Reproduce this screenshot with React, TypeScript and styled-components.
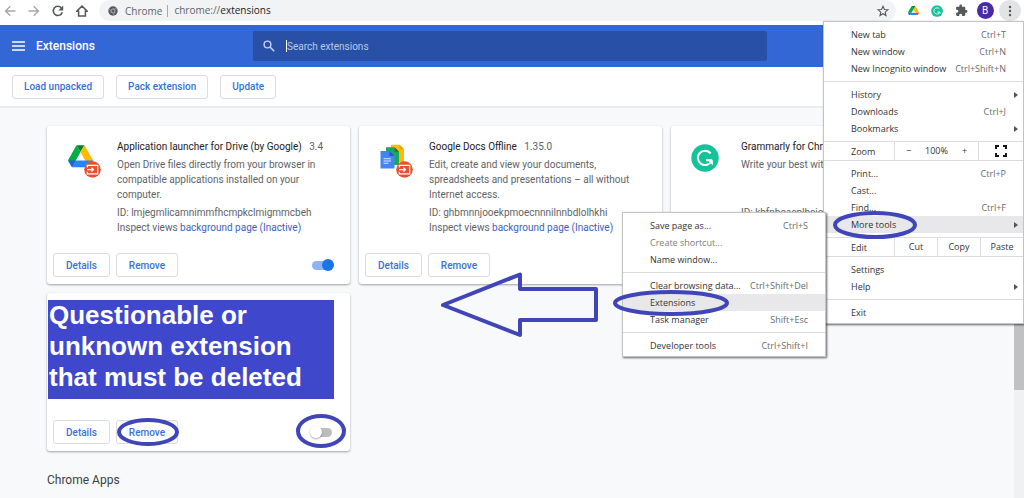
import React from 'react';
import styled, { createGlobalStyle } from 'styled-components';

const ROBOTO = 'Roboto, "Liberation Sans", sans-serif';
const SYSTEM = '"Open Sans", "Noto Sans", sans-serif';
const MARK = '#4045b8';

const GlobalStyle = createGlobalStyle`
  *, *::before, *::after { box-sizing: border-box; }
  html, body { margin: 0; overflow: hidden; background: #f8f9fb; }
  button, input { font: inherit; color: inherit; margin: 0; }
`;

const Page = styled.div`
  position: relative;
  display: flex;
  flex-direction: column;
  min-height: 100vh;
  font-family: ${ROBOTO};
  font-size: 10px;
  line-height: 15px;
  color: #5f6368;
`;

/* Browser bar */

const BrowserBar = styled.div`
  display: flex;
  align-items: center;
  height: 25px;
  padding: 0 3px 4px 4px;
  background: #fff;
  font-family: ${SYSTEM};
`;

const IconButton = styled.button`
  display: grid;
  place-items: center;
  width: 24px;
  height: 21px;
  padding: 0;
  border: 0;
  background: none;
`;

const NavButton = styled(IconButton)`
  width: 12px;
  margin-right: 12px;
`;

const AddressBar = styled.div`
  flex: 1;
  display: flex;
  align-items: center;
  gap: 6px;
  height: 21px;
  margin-left: -1px;
  padding: 0 7px 0 9px;
  border-radius: 11px;
  background: #f1f3f4;
`;

const Origin = styled.span`
  padding: 0 5px 0 1px;
  border-right: 1px solid #a5a8ac;
  line-height: 12px;
`;

const Url = styled.span`
  flex: 1;
  b { font-weight: 400; color: #202124; }
`;

const ExtensionIcons = styled.div`
  display: flex;
  align-items: center;
  margin-left: 5px;
`;

const Avatar = styled.span`
  display: grid;
  place-items: center;
  width: 17px;
  height: 17px;
  border-radius: 50%;
  background: #4a2aa5;
  color: #fff;
  font-family: ${ROBOTO};
  font-size: 10px;
`;

const MenuButton = styled(IconButton)`
  width: 22px;
  margin-left: 2px;
  border-radius: 11px;
  background: #e2e3e5;
`;

/* Extensions page header */

const Header = styled.header`
  display: grid;
  grid-template-columns: 1fr minmax(0, 514px) 1fr;
  align-items: center;
  height: 42px;
  padding: 0 16px 0 12px;
  background: #3367d6;
  color: #fff;
`;

const Brand = styled.div`
  display: flex;
  align-items: center;
  gap: 11px;
`;

const PageTitle = styled.h1`
  margin: 0;
  font-size: 12px;
  font-weight: 500;
`;

const HamburgerButton = styled(IconButton)`
  width: 13px;
`;

const SearchBox = styled.label`
  display: flex;
  align-items: center;
  height: 30px;
  padding-left: 10px;
  border-radius: 2px;
  background: #2850a7;
  color: #c3d1ef;
`;

const Caret = styled.span`
  width: 1px;
  height: 12px;
  margin-left: 11px;
  background: #fff;
`;

const SearchInput = styled.input`
  flex: 1;
  min-width: 0;
  padding: 0;
  border: 0;
  outline: 0;
  background: none;
  &::placeholder { color: #b9c9ec; opacity: 1; }
`;

const Toolbar = styled.div`
  display: flex;
  align-items: center;
  gap: 12px;
  height: 41px;
  padding: 0 12px;
  border-bottom: 2px solid #ebecee;
  background: #fff;
`;

const Button = styled.button`
  height: 24px;
  padding: 0 12px;
  border: 1px solid #dadce0;
  border-radius: 3px;
  background: #fff;
  color: #3a72d0;
  font-weight: 500;
  line-height: 15px;
  white-space: nowrap;
`;

const ToolbarButton = styled(Button)`
  padding: 0 11px;
`;

/* Content */

const Body = styled.div`
  flex: 1;
  display: flex;
`;

const Content = styled.main`
  flex: 1;
  min-width: 0;
  padding: 18px 40px 10px 47px;
`;

const ScrollTrack = styled.div`
  width: 10px;
  background: #f1f1f1;
`;

const ScrollThumb = styled.div`
  height: 72%;
  background: #c1c1c1;
`;

const CardGrid = styled.div`
  display: grid;
  grid-template-columns: repeat(3, minmax(0, 1fr));
  gap: 9px;
`;

const Card = styled.article`
  display: flex;
  flex-direction: column;
  min-height: 158px;
  border-radius: 3px;
  background: #fff;
  box-shadow: 0 1px 2px rgba(60, 64, 67, 0.35), 0 1px 3px rgba(60, 64, 67, 0.15);
`;

const CardMain = styled.div`
  flex: 1;
  display: grid;
  grid-template-columns: 50px minmax(0, 1fr);
  padding: 13px 16px 0 20px;
`;

const LogoCell = styled.div`
  padding-top: 5px;
`;

const CardTitle = styled.h2`
  margin: 0 0 3px;
  font-size: 10px;
  font-weight: 400;
  color: #202124;
  white-space: nowrap;
  span { margin-left: 5px; color: #5f6368; }
`;

const Description = styled.p`
  min-height: 45px;
  margin: 0 0 3px;
`;

const Detail = styled.div`
  white-space: nowrap;
  a { color: #3b62bd; text-decoration: none; }
`;

const CardFooter = styled.div`
  display: flex;
  align-items: center;
  gap: 6px;
  padding: 0 16px 7px 6px;
`;

const Marked = styled.span<{ $end?: boolean }>`
  position: relative;
  display: flex;
  margin-left: ${(p) => (p.$end ? 'auto' : '0')};
`;

const Toggle = styled.input`
  appearance: none;
  position: relative;
  width: 24px;
  height: 12px;
  &::before {
    content: '';
    position: absolute;
    inset: 2px 2px 1px;
    border-radius: 5px;
    background: #bdbdbd;
  }
  &::after {
    content: '';
    position: absolute;
    left: 0;
    top: 0;
    width: 12px;
    height: 12px;
    border-radius: 50%;
    background: #fff;
    box-shadow: 0 1px 2px rgba(0, 0, 0, 0.35);
  }
  &:checked::before { background: #8cb4f5; }
  &:checked::after { left: 12px; background: #1a73e8; box-shadow: none; }
`;

const Warning = styled.p`
  width: 286px;
  max-width: 100%;
  margin: 7px 0 0 1px;
  padding: 0 0 6px 1px;
  background: #3f48cc;
  color: #fff;
  font-family: "Liberation Sans", Arial, sans-serif;
  font-size: 26px;
  font-weight: 700;
  line-height: 31px;
`;

const Spacer = styled.div`
  flex: 1;
`;

const SectionTitle = styled.h2`
  margin: 20px 0 0;
  font-size: 12px;
  font-weight: 400;
  line-height: 18px;
  color: #3c4043;
`;

/* Menus */

const MenuPanel = styled.div`
  position: absolute;
  z-index: 2;
  border: 1px solid #c4c4c4;
  background: #fff;
  box-shadow: 1px 1px 2px rgba(0, 0, 0, 0.6);
  color: #333;
  font-family: ${SYSTEM};
  font-size: 9px;
  line-height: 17px;
  white-space: nowrap;
`;

const MainMenu = styled(MenuPanel)`
  top: 21px;
  right: 0;
  width: 201px;
`;

const SubMenu = styled(MenuPanel)`
  top: -4px;
  right: 197px;
  width: 204px;
`;

const MenuGroup = styled.div`
  padding: 4px 0;
  & + & { border-top: 1px solid #dcdcdc; }
  &:last-child { padding-bottom: 2px; }
`;

const MenuRow = styled.div<{ $active?: boolean; $muted?: boolean }>`
  position: relative;
  display: flex;
  justify-content: space-between;
  height: 17px;
  padding: 0 17px 0 27px;
  background: ${(p) => (p.$active ? '#e8e8ea' : 'transparent')};
  color: ${(p) => (p.$muted ? '#7c7c7c' : 'inherit')};
`;

const MenuItem = styled.button`
  flex: 1;
  padding: 0;
  border: 0;
  background: none;
  text-align: left;
`;

const Shortcut = styled.span`
  color: #6b6b6b;
`;

const SubArrow = styled.span`
  align-self: center;
  margin-right: -12px;
  border: 3px solid transparent;
  border-left: 4px solid #555;
  border-right: 0;
`;

const InlineRow = styled.div`
  display: flex;
  height: 20px;
  border: solid #dcdcdc;
  border-width: 1px 0;
  line-height: 20px;
`;

const InlineLabel = styled.span`
  width: 70px;
  padding-left: 27px;
`;

const InlineCell = styled.div<{ $grow?: boolean }>`
  flex: ${(p) => (p.$grow ? 1 : '0 0 45px')};
  display: flex;
  align-items: center;
  justify-content: center;
  gap: 14px;
  border-left: 1px solid #dcdcdc;
`;

const CellButton = styled.button`
  display: flex;
  padding: 0;
  border: 0;
  background: none;
  line-height: 20px;
`;

/* Hand-drawn marks laid over the page */

const RingSvg = styled.svg<{ $left: number; $top: number }>`
  position: absolute;
  z-index: 3;
  left: ${(p) => p.$left}px;
  top: ${(p) => p.$top}px;
  pointer-events: none;
`;

const ArrowSvg = styled.svg`
  position: absolute;
  left: 441px;
  top: 272px;
  pointer-events: none;
`;

function Ring({ w, h, left, top }: { w: number; h: number; left: number; top: number }) {
  return (
    <RingSvg $left={left} $top={top} width={w} height={h} aria-hidden="true">
      <ellipse cx={w / 2} cy={h / 2} rx={w / 2 - 2} ry={h / 2 - 2} fill="none" stroke={MARK} strokeWidth="4" />
    </RingSvg>
  );
}

/* Icons */

const DriveLogo = ({ size }: { size: number }) => (
  <svg width={size} height={(size * 78) / 87.3} viewBox="0 0 87.3 78" aria-hidden="true">
    <path d="m6.6 66.85 3.85 6.65c.8 1.4 1.95 2.5 3.3 3.3l13.75-23.8h-27.5c0 1.55.4 3.1 1.2 4.5z" fill="#1967d2" />
    <path d="m43.65 25-13.75-23.8c-1.35.8-2.5 1.9-3.3 3.3l-25.4 44a9.06 9.06 0 0 0-1.2 4.5h27.5z" fill="#00ac47" />
    <path d="m73.55 76.8c1.35-.8 2.5-1.9 3.3-3.3l1.6-2.75 7.65-13.25c.8-1.4 1.2-2.95 1.2-4.5h-27.5l5.85 11.5z" fill="#ea4335" />
    <path d="m43.65 25 13.75-23.8c-1.35-.8-2.9-1.2-4.5-1.2h-18.5c-1.6 0-3.15.45-4.5 1.2z" fill="#00832d" />
    <path d="m59.8 53h-32.3l-13.75 23.8c1.35.8 2.9 1.2 4.5 1.2h50.8c1.6 0 3.15-.45 4.5-1.2z" fill="#2684fc" />
    <path d="m73.4 26.5-12.7-22c-.8-1.4-1.95-2.5-3.3-3.3l-13.75 23.8 16.15 28h27.45c0-1.55-.4-3.1-1.2-4.5z" fill="#ffba00" />
  </svg>
);

const SourceBadge = () => (
  <g>
    <circle cx="25.5" cy="25.5" r="8.3" fill="#e8502f" />
    <path d="M20.3 23.5v-2.2h10.4v8.6H20.3v-2.2M20 25.6h6.2M24.5 23.7l2 1.9-2 1.9" fill="none" stroke="#fff" strokeWidth="1.2" />
  </g>
);

const DriveLauncherLogo = () => (
  <svg width="36" height="36" viewBox="0 0 36 36" aria-hidden="true">
    <path d="M9.5 1.2h8L13.5 8z" fill="#00832d" />
    <path d="M9.5 1.2 1 16.3l4.1 6.9L13.5 8z" fill="#00ac47" />
    <path d="M17.5 1.2 26.5 17h-8l-5-9z" fill="#ffba00" />
    <path d="M9 16.5h17.5l-4 6.7H5.1z" fill="#2684fc" />
    <path d="M1 16.5h8l-3.9 6.7z" fill="#1967d2" />
    <SourceBadge />
  </svg>
);

const DocsLogo = () => (
  <svg width="36" height="36" viewBox="0 0 36 36" aria-hidden="true">
    <path d="M12 .8h8.5l4.5 4.4v13.3H12z" fill="#fbbc05" />
    <path d="M20.5.8v4.4H25z" fill="#f29900" />
    <path d="M7 3.3h8.5L20 7.7V21H7z" fill="#1ea362" />
    <path d="M15.5 3.3v4.4H20z" fill="#0b7d3e" />
    <path d="M1.500 7h8.800l5.200 5v12.500h-14z" fill="#4285f4" />
    <path d="M10.300 7v5h5.200z" fill="#2a56c6" />
    <path d="M4.500 14.700h7.500M4.500 17h7.500M4.500 19.300h5" stroke="#dbe7fd" strokeWidth="1.1" />
    <SourceBadge />
  </svg>
);

const GrammarlyLogo = ({ size }: { size: number }) => (
  <svg width={size} height={size} viewBox="0 0 28 28" aria-hidden="true">
    <circle cx="14" cy="14" r="13.7" fill="#15c39a" />
    <path d="M19.7 9.400A7.200 7.200 0 1 0 20.600 16.800M15 16.300h6.300" fill="none" stroke="#fff" strokeWidth="2" />
    <path d="M17.200 16.200h4.600v5z" fill="#fff" />
  </svg>
);

const stroke = (color: string, width = 1.4) => ({ fill: 'none', stroke: color, strokeWidth: width });

const BackIcon = () => (
  <svg width="12" height="12"><path d="M11.5 6h-10M6.300 1.200 1.500 6l4.800 4.800" {...stroke('#a6a8ab')} /></svg>
);
const ForwardIcon = () => (
  <svg width="12" height="12"><path d="M.5 6h10M5.700 1.200 10.500 6l-4.800 4.800" {...stroke('#a6a8ab')} /></svg>
);
const ReloadIcon = () => (
  <svg width="12" height="12">
    <path d="M10.300 7.200A4.600 4.600 0 1 1 9.400 2.900" {...stroke('#55585c', 1.6)} />
    <path d="M11.200.6v4.800H6.400z" fill="#55585c" />
  </svg>
);
const HomeIcon = () => (
  <svg width="12" height="12"><path d="M6 1 .9 6.200h1.700v4.900h6.800V6.200h1.700z" {...stroke('#55585c', 1.5)} /></svg>
);
const ChromeIcon = () => (
  <svg width="10" height="10" viewBox="0 0 10 10">
    <circle cx="5" cy="5" r="4.7" fill="#55585c" />
    <circle cx="5" cy="5" r="2" fill="#55585c" stroke="#c3c6c9" strokeWidth=".8" />
    <path d="M5 2.800h4.300M3.200 6.100 1 2.500M6.900 6.100 4.800 9.700" stroke="#a9acb0" strokeWidth=".6" />
  </svg>
);
const StarIcon = () => (
  <svg width="12" height="12" viewBox="0 0 12 12">
    <path d="m6 1.300 1.400 3.200 3.500.3-2.700 2.300.8 3.400-3-1.800-3 1.800.8-3.400L1.100 4.800l3.500-.3z" {...stroke('#55585c', 1.1)} />
  </svg>
);
const PuzzleIcon = () => (
  <svg width="13" height="13" viewBox="0 0 24 24">
    <path fill="#55585c" d="M20.500 11H19V7c0-1.100-.9-2-2-2h-4V3.500a2.500 2.500 0 0 0-5 0V5H4c-1.100 0-2 .9-2 2v3.800h1.500a2.700 2.700 0 0 1 0 5.400H2V20c0 1.100.9 2 2 2h3.800v-1.500a2.700 2.700 0 0 1 5.400 0V22H17c1.100 0 2-.9 2-2v-4h1.500a2.500 2.500 0 0 0 0-5z" />
  </svg>
);
const DotsIcon = () => (
  <svg width="4" height="12" fill="#55585c">
    <circle cx="2" cy="2" r="1.2" /><circle cx="2" cy="6" r="1.2" /><circle cx="2" cy="10" r="1.2" />
  </svg>
);
const HamburgerIcon = () => (
  <svg width="13" height="10"><path d="M0 1h13M0 5h13M0 9h13" {...stroke('#fff', 1.6)} /></svg>
);
const SearchIcon = () => (
  <svg width="12" height="12"><circle cx="4.5" cy="4.5" r="3.4" {...stroke('#c3d1ef', 1.4)} /><path d="m7 7 4.200 4.200" {...stroke('#c3d1ef', 1.6)} /></svg>
);
const FullscreenIcon = () => (
  <svg width="12" height="12"><path d="M1 4V1h3M8 1h3v3M11 8v3H8M4 11H1V8" {...stroke('#111', 1.9)} /></svg>
);

/* Parts */

type ExtensionProps = {
  logo: React.ReactNode;
  name: string;
  version: string;
  description: string;
  id: string;
};

function ExtensionCard({ logo, name, version, description, id }: ExtensionProps) {
  return (
    <Card>
      <CardMain>
        <LogoCell>{logo}</LogoCell>
        <div>
          <CardTitle>{name} <span>{version}</span></CardTitle>
          <Description>{description}</Description>
          <Detail>ID: {id}</Detail>
          <Detail>Inspect views <a href="#background">background page (Inactive)</a></Detail>
        </div>
      </CardMain>
      <CardFooter>
        <Button>Details</Button>
        <Button>Remove</Button>
        <Marked $end><Toggle type="checkbox" defaultChecked aria-label={`Enable ${name}`} /></Marked>
      </CardFooter>
    </Card>
  );
}

type ItemProps = {
  label: string;
  keys?: string;
  more?: boolean;
  active?: boolean;
  muted?: boolean;
  children?: React.ReactNode;
};

function Item({ label, keys, more, active, muted, children }: ItemProps) {
  return (
    <MenuRow $active={active} $muted={muted}>
      <MenuItem disabled={muted}>{label}</MenuItem>
      {keys && <Shortcut>{keys}</Shortcut>}
      {more && <SubArrow />}
      {children}
    </MenuRow>
  );
}

function ToolsMenu() {
  return (
    <SubMenu>
      <MenuGroup>
        <Item label="Save page as..." keys="Ctrl+S" />
        <Item label="Create shortcut..." muted />
        <Item label="Name window..." />
      </MenuGroup>
      <MenuGroup>
        <Item label="Clear browsing data..." keys="Ctrl+Shift+Del" />
        <Item label="Extensions" active>
          <Ring w={116} h={26} left={-10} top={-4} />
        </Item>
        <Item label="Task manager" keys="Shift+Esc" />
      </MenuGroup>
      <MenuGroup>
        <Item label="Developer tools" keys="Ctrl+Shift+I" />
      </MenuGroup>
    </SubMenu>
  );
}

function ChromeMenu() {
  return (
    <MainMenu>
      <MenuGroup>
        <Item label="New tab" keys="Ctrl+T" />
        <Item label="New window" keys="Ctrl+N" />
        <Item label="New Incognito window" keys="Ctrl+Shift+N" />
      </MenuGroup>
      <MenuGroup>
        <Item label="History" more />
        <Item label="Downloads" keys="Ctrl+J" />
        <Item label="Bookmarks" more />
      </MenuGroup>
      <InlineRow>
        <InlineLabel>Zoom</InlineLabel>
        <InlineCell $grow>
          <CellButton aria-label="Zoom out">−</CellButton>
          <span>100%</span>
          <CellButton aria-label="Zoom in">+</CellButton>
        </InlineCell>
        <InlineCell>
          <CellButton aria-label="Full screen"><FullscreenIcon /></CellButton>
        </InlineCell>
      </InlineRow>
      <MenuGroup>
        <Item label="Print..." keys="Ctrl+P" />
        <Item label="Cast..." />
        <Item label="Find..." keys="Ctrl+F" />
        <Item label="More tools" more active>
          <Ring w={84} h={28} left={9} top={-5} />
          <ToolsMenu />
        </Item>
      </MenuGroup>
      <InlineRow>
        <InlineLabel>Edit</InlineLabel>
        <InlineCell $grow><CellButton>Cut</CellButton></InlineCell>
        <InlineCell $grow><CellButton>Copy</CellButton></InlineCell>
        <InlineCell $grow><CellButton>Paste</CellButton></InlineCell>
      </InlineRow>
      <MenuGroup>
        <Item label="Settings" />
        <Item label="Help" more />
      </MenuGroup>
      <MenuGroup>
        <Item label="Exit" />
      </MenuGroup>
    </MainMenu>
  );
}

export default function App() {
  return (
    <Page>
      <GlobalStyle />
      <BrowserBar>
        <NavButton aria-label="Back"><BackIcon /></NavButton>
        <NavButton aria-label="Forward"><ForwardIcon /></NavButton>
        <NavButton aria-label="Reload"><ReloadIcon /></NavButton>
        <NavButton aria-label="Home"><HomeIcon /></NavButton>
        <AddressBar>
          <ChromeIcon />
          <Origin>Chrome</Origin>
          <Url>chrome://<b>extensions</b></Url>
          <StarIcon />
        </AddressBar>
        <ExtensionIcons>
          <IconButton aria-label="Drive"><DriveLogo size={11} /></IconButton>
          <IconButton aria-label="Grammarly"><GrammarlyLogo size={12} /></IconButton>
          <IconButton aria-label="Extensions"><PuzzleIcon /></IconButton>
          <IconButton aria-label="Profile"><Avatar>B</Avatar></IconButton>
          <MenuButton aria-label="Menu"><DotsIcon /></MenuButton>
        </ExtensionIcons>
      </BrowserBar>
      <Header>
        <Brand>
          <HamburgerButton aria-label="Main menu"><HamburgerIcon /></HamburgerButton>
          <PageTitle>Extensions</PageTitle>
        </Brand>
        <SearchBox>
          <SearchIcon />
          <Caret />
          <SearchInput placeholder="Search extensions" aria-label="Search extensions" />
        </SearchBox>
      </Header>
      <Toolbar>
        <ToolbarButton>Load unpacked</ToolbarButton>
        <ToolbarButton>Pack extension</ToolbarButton>
        <ToolbarButton>Update</ToolbarButton>
      </Toolbar>
      <Body>
        <Content>
          <CardGrid>
            <ExtensionCard
              logo={<DriveLauncherLogo />}
              name="Application launcher for Drive (by Google)"
              version="3.4"
              description="Open Drive files directly from your browser in compatible applications installed on your computer."
              id="lmjegmlicamnimmfhcmpkclmigmmcbeh"
            />
            <ExtensionCard
              logo={<DocsLogo />}
              name="Google Docs Offline"
              version="1.35.0"
              description="Edit, create and view your documents, spreadsheets and presentations – all without Internet access."
              id="ghbmnnjooekpmoecnnnilnnbdlolhkhi"
            />
            <ExtensionCard
              logo={<GrammarlyLogo size={28} />}
              name="Grammarly for Chrome"
              version="14.1"
              description="Write your best with Grammarly for Chrome."
              id="kbfnbcaeplbcioakkpcpgfkobkghlhen"
            />
            <Card>
              <Warning>Questionable or unknown extension that must be deleted</Warning>
              <Spacer />
              <CardFooter>
                <Button>Details</Button>
                <Marked>
                  <Button>Remove</Button>
                  <Ring w={62} h={28} left={1} top={-2} />
                </Marked>
                <Marked $end>
                  <Toggle type="checkbox" aria-label="Enable unknown extension" />
                  <Ring w={50} h={34} left={-14} top={-12} />
                </Marked>
              </CardFooter>
            </Card>
          </CardGrid>
          <SectionTitle>Chrome Apps</SectionTitle>
        </Content>
        <ScrollTrack><ScrollThumb /></ScrollTrack>
      </Body>
      <ArrowSvg width="158" height="66" aria-hidden="true">
        <path d="M2 33 79 2.500V17h76v31H79v15z" fill="none" stroke={MARK} strokeWidth="4" strokeLinejoin="round" />
      </ArrowSvg>
      <ChromeMenu />
    </Page>
  );
}
